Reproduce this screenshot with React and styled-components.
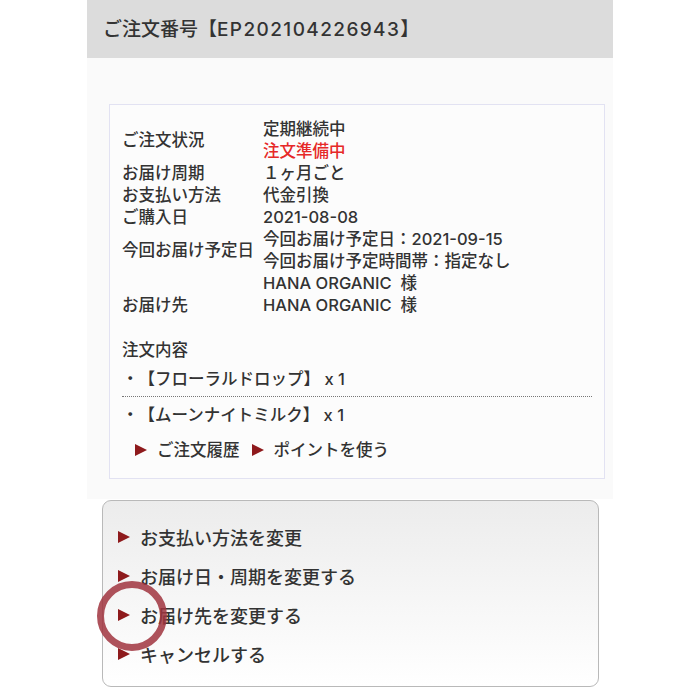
import styled, { createGlobalStyle } from "styled-components";

const GlobalStyle = createGlobalStyle`
  body {
    margin: 0;
    background: #fff;
    font-family: Inter, "Noto Sans CJK JP", sans-serif;
    color: #333;
    text-spacing-trim: space-all;
  }
`;

const Column = styled.div`
  width: 526px;
  margin-left: 87px;
`;

const Header = styled.h1`
  margin: -1px 0 0;
  height: 56px;
  padding: 3px 0 0 16px;
  background: #dcdcdc;
  font-size: 19px;
  font-weight: 500;
  line-height: 56px;
  color: #333;
`;

const OrderNo = styled.span`
  letter-spacing: 1.4px;
`;

const Section = styled.div`
  background: #fafafa;
  padding: 46px 8px 20px 22px;
`;

const DetailBox = styled.div`
  border: 1px solid #e2e2f2;
  background: #fcfcfc;
  padding: 13px 12px 19px 12px;
  font-size: 16.5px;
  font-weight: 500;
  line-height: 22px;
`;

const InfoGrid = styled.div`
  display: grid;
  grid-template-columns: 141px 1fr;
`;

const Label = styled.div`
  display: flex;
  align-items: center;
`;

const Value = styled.div`
  color: ${(p) => (p.$alert ? "#e62828" : "#333")};
  min-height: 22px;
`;

const SubHeading = styled.div`
  margin-top: 1px;
`;

const ItemLine = styled.div`
  padding: 7px 0 6px;
  border-bottom: ${(p) => (p.$divided ? "1px dotted #777" : "none")};
`;

const LinkRow = styled.div`
  display: flex;
  align-items: center;
  gap: 10px;
  padding: 7px 0 0 13px;
  margin-bottom: -2px;
`;

const Link = styled.span`
  display: inline-flex;
  align-items: center;
  gap: 10px;
  margin-right: 2px;
`;

const Arrow = styled.span`
  width: 0;
  height: 0;
  border-top: ${(p) => p.$size / 2}px solid transparent;
  border-bottom: ${(p) => p.$size / 2}px solid transparent;
  border-left: ${(p) => p.$size - 1}px solid #8e1a1c;
  flex-shrink: 0;
`;

const ActionPanel = styled.div`
  position: relative;
  margin: 1px 14px 0 15px;
  border: 1px solid #b9b9b9;
  border-radius: 9px;
  background: linear-gradient(#ececec, #ffffff);
  padding: 16px 15px;
  height: 187px;
  box-sizing: border-box;
`;

const ActionItem = styled.div`
  display: flex;
  align-items: center;
  gap: 10px;
  height: 39px;
  font-size: 18px;
  font-weight: 500;
`;

const Marker = styled.div`
  position: absolute;
  left: -6px;
  top: 80px;
  width: 56px;
  height: 56px;
  border: 7px solid rgba(160, 52, 62, 0.85);
  border-radius: 50%;
`;

const info = [
  { label: "ご注文状況", values: ["定期継続中", { text: "注文準備中", alert: true }] },
  { label: "お届け周期", values: ["１ヶ月ごと"] },
  { label: "お支払い方法", values: ["代金引換"] },
  { label: "ご購入日", values: ["2021-08-08"] },
  {
    label: "今回お届け予定日",
    values: ["今回お届け予定日：2021-09-15", "今回お届け予定時間帯：指定なし"],
  },
  { label: "お届け先", values: ["HANA ORGANIC\u00a0 様", "HANA ORGANIC\u00a0 様", ""] },
];

const actions = ["お支払い方法を変更", "お届け日・周期を変更する", "お届け先を変更する", "キャンセルする"];

export default function App() {
  return (
    <>
      <GlobalStyle />
      <Column>
        <Header>
          ご注文番号【<OrderNo>EP202104226943</OrderNo>】
        </Header>
        <Section>
          <DetailBox>
            <InfoGrid>
              {info.map((row) => [
                <Label key={row.label}>{row.label}</Label>,
                <div key={row.label + "-v"}>
                  {row.values.map((v, i) =>
                    typeof v === "string" ? (
                      <Value key={i}>{v}</Value>
                    ) : (
                      <Value key={i} $alert>
                        {v.text}
                      </Value>
                    )
                  )}
                </div>,
              ])}
            </InfoGrid>
            <SubHeading>注文内容</SubHeading>
            <ItemLine $divided>・【フローラルドロップ】 x 1</ItemLine>
            <ItemLine>・【ムーンナイトミルク】 x 1</ItemLine>
            <LinkRow>
              <Link>
                <Arrow $size={13} />
                ご注文履歴
              </Link>
              <Link>
                <Arrow $size={13} />
                ポイントを使う
              </Link>
            </LinkRow>
          </DetailBox>
        </Section>
        <ActionPanel>
          {actions.map((a) => (
            <ActionItem key={a}>
              <Arrow $size={13} />
              {a}
            </ActionItem>
          ))}
          <Marker />
        </ActionPanel>
      </Column>
    </>
  );
}
